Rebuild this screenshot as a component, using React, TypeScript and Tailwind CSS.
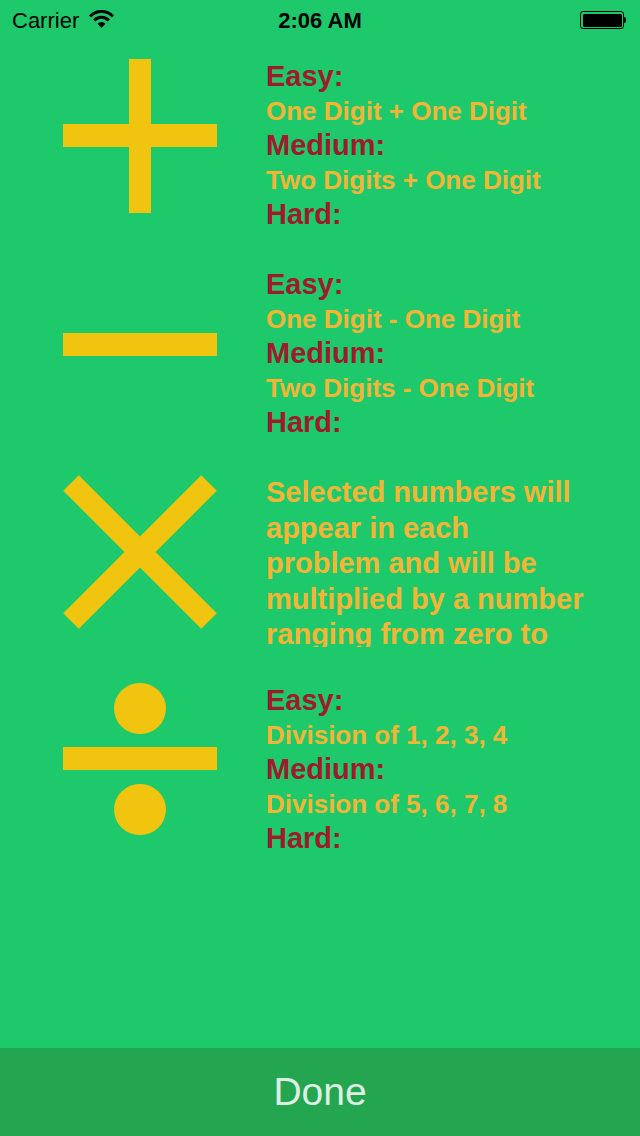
const RED = 'text-[#9e1b2c]';
const GOLD = 'text-[#f4b536]';

function PlusIcon() {
  return (
    <div className="relative w-[154px] h-[154px]">
      <div className="absolute left-0 right-0 top-[65px] h-[23px] bg-[#f1c40f]" />
      <div className="absolute top-0 bottom-0 left-[66px] w-[22px] bg-[#f1c40f]" />
    </div>
  );
}

function MinusIcon() {
  return (
    <div className="flex items-center w-[154px] h-[154px]">
      <div className="w-full h-[23px] bg-[#f1c40f]" />
    </div>
  );
}

function TimesIcon() {
  return (
    <svg width="154" height="154" viewBox="0 0 154 154">
      <path d="M8 8 L146 146 M146 8 L8 146" stroke="#f1c40f" strokeWidth="22" />
    </svg>
  );
}

function DivideIcon() {
  return (
    <div className="flex flex-col items-center w-[154px] h-[154px]">
      <div className="w-[52px] h-[51px] rounded-full bg-[#f1c40f]" />
      <div className="w-full h-[23px] mt-[13px] bg-[#f1c40f]" />
      <div className="w-[52px] h-[51px] mt-[14px] rounded-full bg-[#f1c40f]" />
    </div>
  );
}

function Levels({ easy, medium }: { easy: string; medium: string }) {
  return (
    <div className="font-bold leading-[34.5px]">
      <div className={`text-[29px] ${RED}`}>Easy:</div>
      <div className={`text-[26px] ${GOLD}`}>{easy}</div>
      <div className={`text-[29px] ${RED}`}>Medium:</div>
      <div className={`text-[26px] ${GOLD}`}>{medium}</div>
      <div className={`text-[29px] ${RED}`}>Hard:</div>
    </div>
  );
}

function Row({ icon, children }: { icon: React.ReactNode; children: React.ReactNode }) {
  return (
    <div className="flex h-[208px]">
      <div className="ml-[63px] w-[154px]">{icon}</div>
      <div className="ml-[49px] flex-1">{children}</div>
    </div>
  );
}

function StatusBar() {
  return (
    <div className="relative flex items-center h-[40px] px-3 text-black">
      <span className="text-[22px]">Carrier</span>
      <svg className="ml-[10px] mt-[-2px]" width="25" height="18" viewBox="0 0 25 18">
        <path d="M1 6.5 A16 16 0 0 1 24 6.5" fill="none" stroke="#000" strokeWidth="3" />
        <path d="M5.2 10.5 A10 10 0 0 1 19.8 10.5" fill="none" stroke="#000" strokeWidth="3" />
        <path d="M8.5 13.8 A5.5 5.5 0 0 1 16.5 13.8 L12.5 18 Z" fill="#000" />
      </svg>
      <span className="absolute left-0 right-0 text-center text-[22px] font-bold pointer-events-none">2:06 AM</span>
      <div className="ml-auto mr-[2px] flex items-center">
        <div className="w-[44px] h-[18px] rounded-[3px] border border-black p-[1.5px]">
          <div className="w-full h-full rounded-[1.5px] bg-black" />
        </div>
        <div className="w-[2px] h-[6px] bg-black rounded-r" />
      </div>
    </div>
  );
}

export default function App() {
  return (
    <div
      className="w-[640px] h-[1136px] bg-[#1dc96b] flex flex-col overflow-hidden"
      style={{ fontFamily: '"Liberation Sans", Arial, sans-serif' }}
    >
      <StatusBar />
      <div className="flex-1 pt-[19px]">
        <Row icon={<PlusIcon />}>
          <Levels easy="One Digit + One Digit" medium="Two Digits + One Digit" />
        </Row>
        <Row icon={<MinusIcon />}>
          <Levels easy="One Digit - One Digit" medium="Two Digits - One Digit" />
        </Row>
        <Row icon={<TimesIcon />}>
          <div className={`h-[172px] overflow-hidden font-bold text-[29px] leading-[35.5px] ${GOLD}`}>
            <div>Selected numbers will</div>
            <div>appear in each</div>
            <div>problem and will be</div>
            <div>multiplied by a number</div>
            <div>ranging from zero to</div>
          </div>
        </Row>
        <Row icon={<DivideIcon />}>
          <Levels easy="Division of 1, 2, 3, 4" medium="Division of 5, 6, 7, 8" />
        </Row>
      </div>
      <button className="h-[88px] w-full bg-[#24a651] text-[#ddefe4] text-[39px] flex items-center justify-center">
        Done
      </button>
    </div>
  );
}
